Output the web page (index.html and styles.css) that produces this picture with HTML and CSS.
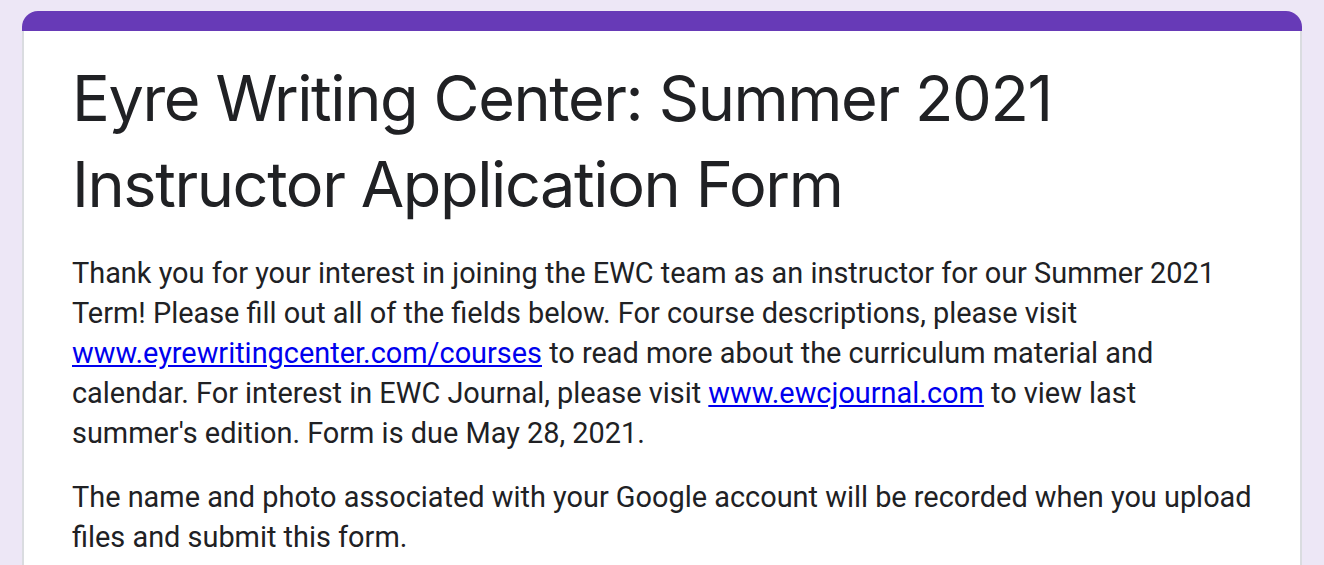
FILE: index.html
```html
<!DOCTYPE html>
<html lang="en">
<head>
<meta charset="utf-8">
<title>Eyre Writing Center: Summer 2021 Instructor Application Form</title>
<link rel="stylesheet" href="styles.css">
</head>
<body>
<div class="page">
  <div class="card">
    <div class="bar"></div>
    <div class="card-body">
      <h1 class="title">Eyre Writing Center: Summer 2021 Instructor Application Form</h1>
      <div class="desc">
        <p>Thank you for your interest in joining the EWC team as an instructor for our Summer 2021 Term! Please fill out all of the fields below. For course descriptions, please visit <a href="#">www.eyrewritingcenter.com/courses</a> to read more about the curriculum material and calendar. For interest in EWC Journal, please visit <a href="#">www.ewcjournal.com</a> to view last summer's edition. Form is due May 28, 2021.</p>
        <p>The name and photo associated with your Google account will be recorded when you upload files and submit this form.</p>
      </div>
    </div>
  </div>
</div>
</body>
</html>
```
FILE: styles.css
```css
html, body {
  margin: 0;
  padding: 0;
}
body {
  background: #ede7f6;
  font-family: Roboto, "Liberation Sans", sans-serif;
  color: #202124;
}
.page {
  padding: 11px 22px 0 22px;
}
.card {
  background: #ffffff;
  border-radius: 16px 16px 0 0;
  overflow: hidden;
}
.bar {
  height: 20px;
  background: #673ab7;
}
.card-body {
  border: 2px solid #dadce0;
  border-top: none;
  border-bottom: none;
  padding: 24px 48px 60px 48px;
}
.title {
  margin: 0 0 25px 0;
  font-family: Inter, "Open Sans", sans-serif;
  font-weight: 400;
  font-size: 63px;
  letter-spacing: -1.4px;
  line-height: 86.4px;
  color: #202124;
}
.desc {
  font-size: 28.9px;
  line-height: 40px;
  margin-right: -12px;
}
.desc p {
  margin: 0 0 24px 0;
}
.desc a {
  color: #0000ee;
  text-decoration: underline;
}
```
